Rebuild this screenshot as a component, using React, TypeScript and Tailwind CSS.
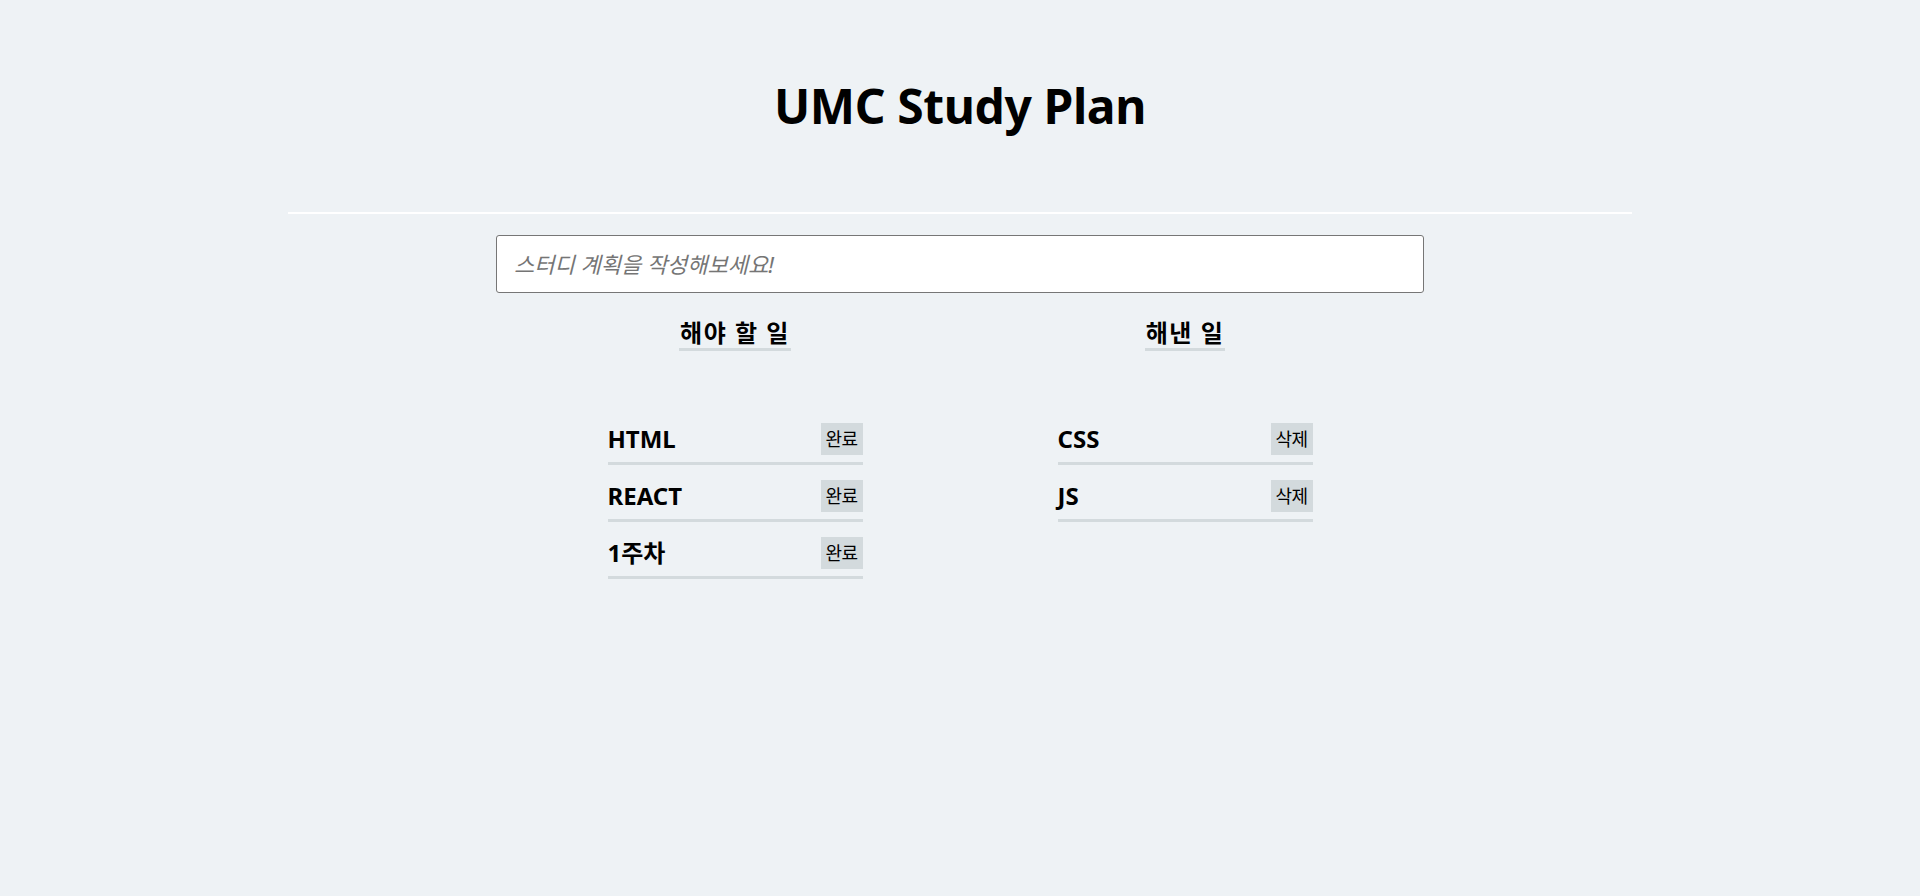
import React from "react";

const FONT = "font-['Noto_Sans','Noto_Sans_CJK_KR',sans-serif]";

function Item({ label, action }: { label: string; action: string }) {
  return (
    <li className="w-[255px] flex items-center justify-between pb-[7px] border-b-[3px] border-[#d3dadd]">
      <span className="text-[24px] leading-[32px] font-bold text-black">{label}</span>
      <button className="h-[32px] w-[42px] flex items-center justify-center bg-[#d3dadd] text-[18px] leading-[32px] tracking-[-0.5px] text-black">{action}</button>
    </li>
  );
}

export default function App() {
  const todo = ["HTML", "REACT", "1주차"];
  const done = ["CSS", "JS"];
  return (
    <div className={`min-h-screen bg-[#eef2f5] ${FONT} flex flex-col items-center`}>
      <h1 className="mt-[77px] text-[48px] leading-[58px] tracking-[-0.4px] font-bold text-black">UMC Study Plan</h1>
      <div className="mt-[77px] w-[70%] h-[2px] bg-white" />
      <input
        className="mt-[21px] w-[928px] h-[58px] bg-white border border-[#767676] rounded-[3px] px-[17px] text-[22px] placeholder:italic placeholder:text-[#757575] outline-none"
        placeholder="스터디 계획을 작성해보세요!"
      />
      <div className="mt-[25px] flex">
        <div className="w-[450px] flex flex-col items-center">
          <h2 className="text-[24px] leading-[30px] font-bold pl-[1px] pr-[1px] border-b-[3px] border-[#d3dadd] tracking-[1.5px]">해야 할 일</h2>
          <ul className="mt-[72px] flex flex-col gap-[15px]">
            {todo.map((t) => (
              <Item key={t} label={t} action="완료" />
            ))}
          </ul>
        </div>
        <div className="w-[450px] flex flex-col items-center">
          <h2 className="text-[24px] leading-[30px] font-bold pl-[1px] pr-[1px] border-b-[3px] border-[#d3dadd] tracking-[1.5px]">해낸 일</h2>
          <ul className="mt-[72px] flex flex-col gap-[15px]">
            {done.map((t) => (
              <Item key={t} label={t} action="삭제" />
            ))}
          </ul>
        </div>
      </div>
    </div>
  );
}
